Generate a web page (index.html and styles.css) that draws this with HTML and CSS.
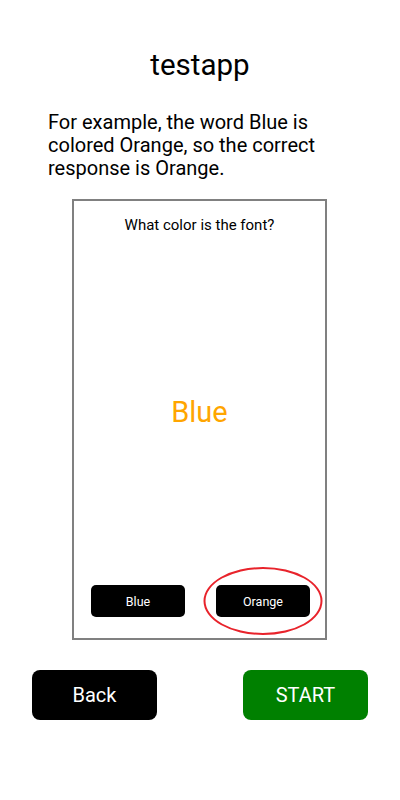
FILE: index.html
```html
<!DOCTYPE html>
<html lang="en">
<head>
<meta charset="utf-8">
<title>testapp</title>
<link rel="stylesheet" href="styles.css">
</head>
<body>
<main class="page">
  <h1 class="title">testapp</h1>
  <p class="desc">For example, the word Blue is colored Orange, so the correct response is Orange.</p>
  <section class="frame">
    <div class="question">What color is the font?</div>
    <div class="word">Blue</div>
    <div class="choices">
      <div class="choice">Blue</div>
      <div class="choice highlighted">Orange<span class="ring"></span></div>
    </div>
  </section>
  <div class="actions">
    <button class="btn back">Back</button>
    <button class="btn start">START</button>
  </div>
</main>
</body>
</html>
```
FILE: styles.css
```css
html, body {
  margin: 0;
  padding: 0;
  background: #ffffff;
}
body {
  font-family: Roboto, "Liberation Sans", sans-serif;
  color: #000;
  width: 400px;
  height: 800px;
  overflow: hidden;
}
.page {
  display: flex;
  flex-direction: column;
  padding-top: 49px;
}
.title {
  margin: 0;
  font-size: 29.5px;
  line-height: 32px;
  font-weight: 400;
  text-align: center;
}
.desc {
  margin: 30px 0 0 48px;
  width: 304px;
  font-size: 20px;
  line-height: 23px;
}
.frame {
  box-sizing: border-box;
  margin: 19px 0 0 72px;
  width: 255px;
  height: 441px;
  border: 2px solid #808080;
  display: flex;
  flex-direction: column;
  padding: 16px 0 21px;
}
.question {
  font-size: 15px;
  line-height: 16px;
  text-align: center;
}
.word {
  margin-top: 162px;
  font-size: 29px;
  line-height: 35px;
  color: #ffa500;
  text-align: center;
}
.choices {
  margin-top: auto;
  display: flex;
  gap: 31px;
  padding-left: 17px;
}
.choice {
  position: relative;
  width: 94px;
  height: 32px;
  border-radius: 5px;
  background: #000;
  color: #fff;
  font-size: 12.5px;
  display: flex;
  align-items: center;
  justify-content: center;
}
.ring {
  position: absolute;
  left: 50%;
  top: 50%;
  width: 119px;
  height: 68px;
  box-sizing: border-box;
  transform: translate(-50%, -50%);
  border: 2px solid #e8232b;
  border-radius: 50%;
}
.actions {
  display: flex;
  justify-content: space-between;
  padding: 0 32px;
  margin-top: 30px;
}
.btn {
  width: 125px;
  height: 50px;
  border: none;
  border-radius: 8px;
  color: #fff;
  font-family: Roboto, "Liberation Sans", sans-serif;
  font-size: 20px;
  padding: 0;
}
.back {
  background: #000;
}
.start {
  background: #008000;
}
```
